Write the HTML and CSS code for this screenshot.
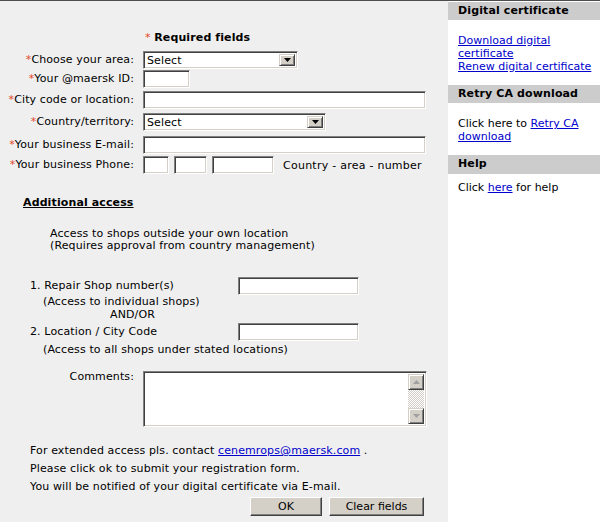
FILE: index.html
```html
<!DOCTYPE html>
<html>
<head>
<meta charset="utf-8">
<title>Registration</title>
<link rel="stylesheet" href="styles.css">
</head>
<body>
<div class="page">
  <div class="main">
    <div class="req"><span class="ast">*</span> <b>Required fields</b></div>

    <div class="fields">
      <div class="lbl"><span class="ast">*</span>Choose your area:</div>
      <div class="ctl">
        <div class="select w-area"><span class="val">Select</span><span class="drop"><svg width="7" height="4" viewBox="0 0 7 4"><polygon points="0,0 7,0 3.5,4" fill="#000"/></svg></span></div>
      </div>

      <div class="lbl"><span class="ast">*</span>Your @maersk ID:</div>
      <div class="ctl"><input class="txt w-id" type="text"></div>

      <div class="lbl"><span class="ast">*</span>City code or location:</div>
      <div class="ctl"><input class="txt w-long" type="text"></div>

      <div class="lbl"><span class="ast">*</span>Country/territory:</div>
      <div class="ctl">
        <div class="select w-country"><span class="val">Select</span><span class="drop"><svg width="7" height="4" viewBox="0 0 7 4"><polygon points="0,0 7,0 3.5,4" fill="#000"/></svg></span></div>
      </div>

      <div class="lbl"><span class="ast">*</span>Your business E-mail:</div>
      <div class="ctl"><input class="txt w-long" type="text"></div>

      <div class="lbl"><span class="ast">*</span>Your business Phone:</div>
      <div class="ctl">
        <input class="txt w-ph1" type="text">
        <input class="txt w-ph2" type="text">
        <input class="txt w-ph3" type="text">
        <span class="hint">Country - area - number</span>
      </div>
    </div>

    <div class="sect-title">Additional access</div>
    <div class="intro">Access to shops outside your own location<br>(Requires approval from country management)</div>

    <div class="access">
      <div class="arow"><span class="alabel">1. Repair Shop number(s)</span><input class="txt w-acc" type="text"></div>
      <div class="note">(Access to individual shops)</div>
      <div class="note andor">AND/OR</div>
      <div class="arow second"><span class="alabel">2. Location / City Code</span><input class="txt w-acc" type="text"></div>
      <div class="note last">(Access to all shops under stated locations)</div>
    </div>

    <div class="comments">
      <div class="clbl">Comments:</div>
      <div class="textarea">
        <div class="ta-body"></div>
        <div class="scroll">
          <div class="sbtn"><svg width="7" height="4" viewBox="0 0 7 4"><polygon points="0,4 7,4 3.5,0" fill="#a0a0a0"/></svg></div>
          <div class="track"></div>
          <div class="sbtn"><svg width="7" height="4" viewBox="0 0 7 4"><polygon points="0,0 7,0 3.5,4" fill="#a0a0a0"/></svg></div>
        </div>
      </div>
    </div>

    <div class="footer">
      <div>For extended access pls. contact <a href="#">cenemrops@maersk.com</a> .</div>
      <div>Please click ok to submit your registration form.</div>
      <div>You will be notified of your digital certificate via E-mail.</div>
    </div>

    <div class="buttons">
      <button class="btn w-ok" type="button">OK</button>
      <button class="btn w-clear" type="button">Clear fields</button>
    </div>
  </div>

  <div class="side">
    <div class="side-h">Digital certificate</div>
    <div class="side-b b1">
      <div><a href="#">Download digital</a></div>
      <div><a href="#">certificate</a></div>
      <div><a href="#">Renew digital certificate</a></div>
    </div>
    <div class="side-h">Retry CA download</div>
    <div class="side-b b2">
      <div>Click here to <a href="#">Retry CA</a></div>
      <div><a href="#">download</a></div>
    </div>
    <div class="side-h h3">Help</div>
    <div class="side-b b3">Click <a href="#">here</a> for help</div>
  </div>
</div>
</body>
</html>
```

FILE: styles.css
```css
html, body {
  margin: 0;
  padding: 0;
  background: #fff;
}
body {
  font-family: "DejaVu Sans", Verdana, sans-serif;
  font-size: 11px;
  line-height: 13px;
  letter-spacing: 0.12px;
  color: #000;
}
a {
  color: #0000cc;
  text-decoration: underline;
}
.page {
  display: flex;
  width: 600px;
  height: 521px;
  border-top: 1px solid #4d4d4d;
}
.main {
  width: 448px;
  background: #efefef;
}
.side {
  width: 152px;
  background: #fff;
  padding-top: 1px;
}

/* required heading */
.req {
  margin-top: 30px;
  padding-left: 145px;
  line-height: 13px;
}
.ast {
  color: #e5461f;
}

/* main field grid */
.fields {
  display: grid;
  grid-template-columns: 134px auto;
  grid-template-rows: 19px 21px 22px 23px 20px 18px;
  column-gap: 9px;
  align-items: start;
  margin-top: 7px;
}
.lbl {
  text-align: right;
  line-height: 18px;
  white-space: nowrap;
}
.ctl {
  display: flex;
  align-items: center;
  gap: 5px;
  height: 18px;
}
.hint {
  margin-left: 4px;
  white-space: nowrap;
  letter-spacing: 0.25px;
}

/* sunken text inputs */
.txt {
  box-sizing: border-box;
  height: 18px;
  margin: 0;
  padding: 0 2px;
  background: #fff;
  border: 1px solid;
  border-color: #808080 #fff #fff #808080;
  box-shadow: inset 1px 1px #404040, inset -1px -1px #d4d0c8;
  font: inherit;
  outline: none;
}
.w-id { width: 47px; }
.w-long { width: 283px; }
.w-ph1 { width: 26px; }
.w-ph2 { width: 33px; }
.w-ph3 { width: 62px; }
.w-acc { width: 121px; }

/* fake select */
.select {
  box-sizing: border-box;
  display: flex;
  align-items: stretch;
  height: 18px;
  padding: 2px;
  background: #fff;
  border: 1px solid;
  border-color: #808080 #fff #fff #808080;
  box-shadow: inset 1px 1px #404040, inset -1px -1px #d4d0c8;
}
.w-area { width: 155px; }
.w-country { width: 183px; }
.select .val {
  flex: 1;
  padding-left: 1px;
  line-height: 13px;
}
.select .drop {
  box-sizing: border-box;
  width: 16px;
  display: flex;
  align-items: center;
  justify-content: center;
  background: #d4d0c8;
  border: 1px solid;
  border-color: #d4d0c8 #404040 #404040 #d4d0c8;
  box-shadow: inset 1px 1px #fff, inset -1px -1px #808080;
}

/* additional access */
.sect-title {
  margin: 22px 0 0 23px;
  font-weight: bold;
  text-decoration: underline;
  line-height: 13px;
}
.intro {
  margin: 19px 0 0 50px;
  line-height: 12px;
}
.access {
  margin-top: 25px;
  padding-left: 30px;
}
.arow {
  display: flex;
  align-items: center;
  height: 18px;
}
.arow.second {
  margin-top: 2px;
}
.alabel {
  width: 208px;
  line-height: 18px;
}
.note {
  padding-left: 13px;
  line-height: 13px;
}
.note.andor {
  padding-left: 80px;
}
.note.last {
  margin-top: 2px;
}

/* comments */
.comments {
  display: grid;
  grid-template-columns: 134px auto;
  column-gap: 9px;
  align-items: start;
  margin-top: 15px;
}
.clbl {
  text-align: right;
  line-height: 11px;
}
.textarea {
  box-sizing: border-box;
  display: flex;
  width: 284px;
  height: 56px;
  padding: 2px;
  background: #fff;
  border: 1px solid;
  border-color: #808080 #fff #fff #808080;
  box-shadow: inset 1px 1px #404040, inset -1px -1px #d4d0c8;
}
.ta-body {
  flex: 1;
}
.scroll {
  width: 16px;
  display: flex;
  flex-direction: column;
}
.sbtn {
  box-sizing: border-box;
  height: 16px;
  display: flex;
  align-items: center;
  justify-content: center;
  background: #d4d0c8;
  border: 1px solid;
  border-color: #d4d0c8 #404040 #404040 #d4d0c8;
  box-shadow: inset 1px 1px #fff, inset -1px -1px #808080;
}
.track {
  flex: 1;
  background-color: #fff;
  background-image: repeating-conic-gradient(#d4d0c8 0 25%, #fff 0 50%);
  background-size: 2px 2px;
}

/* footer */
.footer {
  margin-top: 15px;
  padding-left: 30px;
  line-height: 18px;
}
.buttons {
  display: flex;
  gap: 7px;
  margin-top: 1px;
  padding-left: 250px;
}
.btn {
  box-sizing: border-box;
  height: 19px;
  margin: 0;
  padding: 0;
  background: #d4d0c8;
  border: 1px solid;
  border-color: #fff #404040 #404040 #fff;
  box-shadow: inset -1px -1px #808080;
  font: inherit;
  color: #000;
  line-height: 15px;
}
.w-ok { width: 72px; }
.w-clear { width: 95px; }

/* sidebar */
.side-h {
  height: 18px;
  line-height: 18px;
  padding-left: 10px;
  background: #cccccc;
  font-weight: bold;
  white-space: nowrap;
}
.side-h.h3 {
  height: 19px;
}
.side-b {
  padding: 14px 2px 12px 10px;
  line-height: 13px;
  letter-spacing: 0;
  white-space: nowrap;
}
.side-b.b3 {
  padding-top: 7px;
}
```
